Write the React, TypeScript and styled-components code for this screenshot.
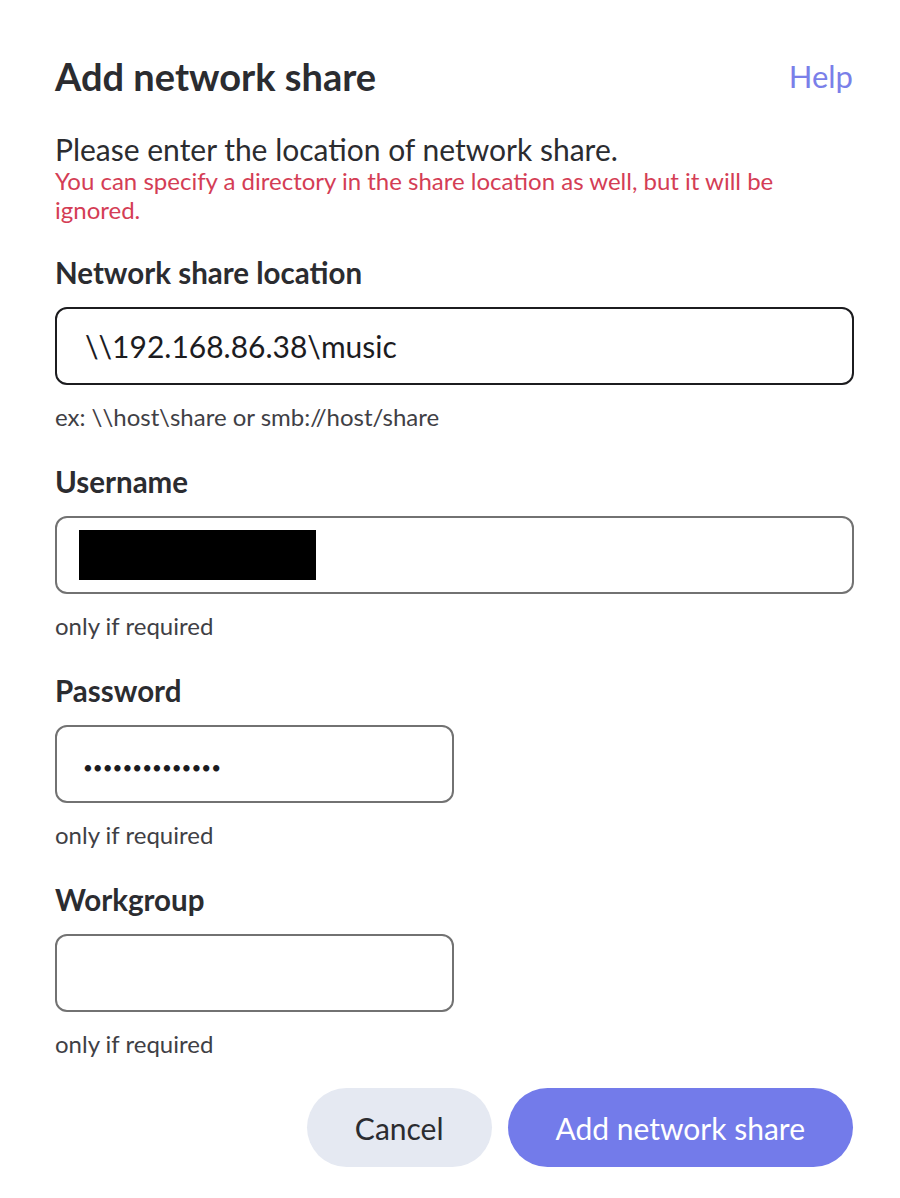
import React from "react";
import styled, { createGlobalStyle } from "styled-components";

const Global = createGlobalStyle`
  html, body { margin: 0; padding: 0; background: #ffffff; }
  body { font-family: Lato, "Open Sans", sans-serif; color: #2b2c30; }
  * { box-sizing: border-box; }
`;

const Dialog = styled.div`
  width: 900px;
  padding: 50px 47px 30px 55px;
  display: flex;
  flex-direction: column;
`;

const Header = styled.div`
  display: flex;
  align-items: center;
  justify-content: space-between;
  height: 52px;
`;

const Title = styled.h1`
  margin: 0;
  font-size: 38px;
  font-weight: 700;
  color: #2b2c30;
`;

const HelpLink = styled.a`
  font-size: 31px;
  color: #7a7fe9;
  text-decoration: none;
`;

const Intro = styled.p`
  margin: 30px 0 0;
  font-size: 30px;
  line-height: 34px;
  color: #2b2c30;
`;

const Warning = styled.p`
  margin: 0;
  font-size: 24px;
  line-height: 29px;
  color: #d43d55;
`;

const Field = styled.div<{ $first?: boolean }>`
  display: flex;
  flex-direction: column;
  margin-top: ${(p) => (p.$first ? "31px" : "32px")};
`;

const Label = styled.label`
  font-size: 29.5px;
  font-weight: 700;
  line-height: 36px;
  color: #2b2c30;
`;

const InputShell = styled.div<{ $narrow?: boolean; $focused?: boolean }>`
  margin-top: 16px;
  width: ${(p) => (p.$narrow ? "399px" : "799px")};
  height: 78px;
  border-radius: 12px;
  border: 2px solid ${(p) => (p.$focused ? "#1c1c1f" : "#727272")};
  display: flex;
  align-items: center;
  padding: 0 22px 0 28px;
  background: #fff;
`;

const TextInput = styled.input<{ $masked?: boolean }>`
  border: none;
  outline: none;
  background: transparent;
  width: 100%;
  font-family: Lato, "Open Sans", sans-serif;
  font-size: ${(p) => (p.$masked ? "17px" : "30px")};
  color: #1c1c1f;
  padding: 0;
  margin-top: ${(p) => (p.$masked ? "6px" : "0")};
  margin-left: ${(p) => (p.$masked ? "-2px" : "0")};
`;

const Redaction = styled.span`
  display: block;
  width: 237px;
  height: 50px;
  margin-left: -6px;
  background: #000;
`;

const Hint = styled.div`
  margin-top: 17px;
  font-size: 24px;
  line-height: 30px;
  color: #3f4045;
`;

const Actions = styled.div`
  display: flex;
  justify-content: flex-end;
  gap: 16px;
  margin-top: 29px;
`;

const Button = styled.button<{ $primary?: boolean }>`
  height: 79px;
  border: none;
  border-radius: 40px;
  padding: 0 48px;
  font-family: Lato, "Open Sans", sans-serif;
  font-size: 30px;
  color: ${(p) => (p.$primary ? "#ffffff" : "#2b2c30")};
  background: ${(p) => (p.$primary ? "#737bea" : "#e5e9f2")};
  cursor: pointer;
`;

export default function App() {
  return (
    <>
      <Global />
      <Dialog>
        <Header>
          <Title>Add network share</Title>
          <HelpLink href="#">Help</HelpLink>
        </Header>
        <Intro>Please enter the location of network share.</Intro>
        <Warning>
          You can specify a directory in the share location as well, but it will be ignored.
        </Warning>

        <Field $first>
          <Label>Network share location</Label>
          <InputShell $focused>
            <TextInput readOnly value={"\\\\192.168.86.38\\music"} />
          </InputShell>
          <Hint>ex: \\host\share or smb://host/share</Hint>
        </Field>

        <Field>
          <Label>Username</Label>
          <InputShell>
            <Redaction />
          </InputShell>
          <Hint>only if required</Hint>
        </Field>

        <Field>
          <Label>Password</Label>
          <InputShell $narrow>
            <TextInput $masked type="password" readOnly value="abcdefghijklmn" />
          </InputShell>
          <Hint>only if required</Hint>
        </Field>

        <Field>
          <Label>Workgroup</Label>
          <InputShell $narrow>
            <TextInput readOnly value="" />
          </InputShell>
          <Hint>only if required</Hint>
        </Field>

        <Actions>
          <Button>Cancel</Button>
          <Button $primary>Add network share</Button>
        </Actions>
      </Dialog>
    </>
  );
}
